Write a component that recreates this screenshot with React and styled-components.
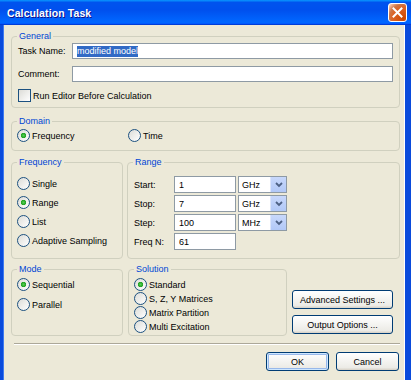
import styled, { createGlobalStyle } from "styled-components";

const GlobalStyle = createGlobalStyle`
  html, body {
    margin: 0;
    padding: 0;
    background: #ece9d8;
  }
  body {
    font-family: "Liberation Sans", Arial, sans-serif;
    font-size: 9px;
    color: #000;
  }
`;

const App = () => {
  return (
    <>
      <GlobalStyle />
      <Window>
        <TitleBar>
          <Title>Calculation Task</Title>
          <CloseButton>
            <svg width="11" height="11" viewBox="0 0 11 11">
              <path d="M1.5 1.5 L9.5 9.5 M9.5 1.5 L1.5 9.5" stroke="#fff" strokeWidth="2" strokeLinecap="square" />
            </svg>
          </CloseButton>
        </TitleBar>

        <Body>
          <Group $h={77}>
            <Legend>General</Legend>
            <GroupBody $gap={7} $pt={1}>
              <Row>
                <FieldLabel $w={56}>Task Name:</FieldLabel>
                <TextBox>
                  <Selected>modified model</Selected>
                </TextBox>
              </Row>
              <Row>
                <FieldLabel $w={56}>Comment:</FieldLabel>
                <TextBox />
              </Row>
              <Row>
                <CheckBox />
                <OptionText>Run Editor Before Calculation</OptionText>
              </Row>
            </GroupBody>
          </Group>

          <Group $h={35} $mt={8}>
            <Legend>Domain</Legend>
            <GroupBody $pt={2}>
              <Row>
                <Option $w={111}>
                  <Radio $on />
                  <OptionText>Frequency</OptionText>
                </Option>
                <Option>
                  <Radio />
                  <OptionText>Time</OptionText>
                </Option>
              </Row>
            </GroupBody>
          </Group>

          <Columns $mt={6} $gap={4}>
            <Group $h={102} $w={112}>
              <Legend>Frequency</Legend>
              <GroupBody $gap={6} $pt={9}>
                <Option>
                  <Radio />
                  <OptionText>Single</OptionText>
                </Option>
                <Option>
                  <Radio $on />
                  <OptionText>Range</OptionText>
                </Option>
                <Option>
                  <Radio />
                  <OptionText>List</OptionText>
                </Option>
                <Option>
                  <Radio />
                  <OptionText>Adaptive Sampling</OptionText>
                </Option>
              </GroupBody>
            </Group>

            <Group $h={102} $grow>
              <Legend>Range</Legend>
              <RangeGrid>
                <FieldLabel>Start:</FieldLabel>
                <TextBox $h={17}>1</TextBox>
                <Dropdown value="GHz" />
                <FieldLabel>Stop:</FieldLabel>
                <TextBox $h={17}>7</TextBox>
                <Dropdown value="GHz" />
                <FieldLabel>Step:</FieldLabel>
                <TextBox $h={17}>100</TextBox>
                <Dropdown value="MHz" />
                <FieldLabel>Freq N:</FieldLabel>
                <TextBox $h={17}>61</TextBox>
              </RangeGrid>
            </Group>
          </Columns>

          <Columns $mt={5} $gap={5}>
            <Group $h={72} $w={112}>
              <Legend>Mode</Legend>
              <GroupBody $gap={7} $pt={3}>
                <Option>
                  <Radio $on />
                  <OptionText>Sequential</OptionText>
                </Option>
                <Option>
                  <Radio />
                  <OptionText>Parallel</OptionText>
                </Option>
              </GroupBody>
            </Group>

            <Group $h={72} $w={159}>
              <Legend>Solution</Legend>
              <GroupBody $gap={1} $pt={3}>
                <Option>
                  <Radio $on />
                  <OptionText>Standard</OptionText>
                </Option>
                <Option>
                  <Radio />
                  <OptionText>S, Z, Y Matrices</OptionText>
                </Option>
                <Option>
                  <Radio />
                  <OptionText>Matrix Partition</OptionText>
                </Option>
                <Option>
                  <Radio />
                  <OptionText>Multi Excitation</OptionText>
                </Option>
              </GroupBody>
            </Group>

            <SideButtons>
              <Button $w={101}>Advanced Settings ...</Button>
              <Button $w={101}>Output Options ...</Button>
            </SideButtons>
          </Columns>

          <Separator />

          <Footer>
            <Button $w={63} $default>OK</Button>
            <Button $w={63}>Cancel</Button>
          </Footer>
        </Body>
      </Window>
    </>
  );
};

const Dropdown = ({ value }) => (
  <Select>
    <SelectValue>{value}</SelectValue>
    <SelectArrow>
      <svg width="8" height="6" viewBox="0 0 8 6">
        <path d="M1 1 L4 4 L7 1" stroke="#4d6185" strokeWidth="1.8" fill="none" />
      </svg>
    </SelectArrow>
  </Select>
);

export default App;

const Window = styled.div`
  width: 411px;
  height: 380px;
  display: flex;
  flex-direction: column;
  overflow: hidden;
`;

const TitleBar = styled.div`
  flex: none;
  height: 25px;
  display: flex;
  align-items: center;
  justify-content: space-between;
  padding: 0 4px 0 7px;
  box-sizing: border-box;
  background: linear-gradient(
    180deg,
    #0997ff 0%,
    #0053ee 10%,
    #0050ee 40%,
    #0066ff 85%,
    #0066ff 90%,
    #005bff 94%,
    #003dd7 97%,
    #003dd7 100%
  );
`;

const Title = styled.div`
  color: #fff;
  font-size: 10.5px;
  font-weight: 700;
  letter-spacing: 0.1px;
  text-shadow: 1px 1px #0f1089;
`;

const CloseButton = styled.div`
  width: 19px;
  height: 19px;
  box-sizing: border-box;
  border: 1px solid #fff;
  border-radius: 3px;
  display: flex;
  align-items: center;
  justify-content: center;
  background: radial-gradient(
    circle at 85% 85%,
    #cc4600 0%,
    #dc6527 55%,
    #cd7546 70%,
    #ffccb2 95%,
    #fff 100%
  );
`;

const Body = styled.div`
  flex: 1;
  display: flex;
  flex-direction: column;
  background: #ece9d8;
  border-left: 3px solid #0a4bdc;
  border-right: 6px solid #0a4bdc;
  box-shadow: inset 1px 0 #3f7af0, inset -1px 0 #fff;
  padding: 6px 5px 0 8px;
`;

const Group = styled.fieldset`
  margin: ${(p) => p.$mt || 0}px 0 0 0;
  padding: 0 6px 0 4px;
  min-width: 0;
  height: ${(p) => p.$h}px;
  width: ${(p) => (p.$w ? `${p.$w}px` : "auto")};
  flex: ${(p) => (p.$grow ? 1 : "none")};
  box-sizing: border-box;
  border: 1px solid #d0d0bf;
  border-radius: 4px;
`;

const Legend = styled.legend`
  padding: 0 2px;
  margin-left: 1px;
  color: #0046d5;
  line-height: 11px;
`;

const GroupBody = styled.div`
  display: flex;
  flex-direction: column;
  gap: ${(p) => p.$gap || 0}px;
  padding-top: ${(p) => p.$pt || 0}px;
`;

const Row = styled.div`
  display: flex;
  align-items: center;
`;

const FieldLabel = styled.div`
  flex: none;
  width: ${(p) => (p.$w ? `${p.$w}px` : "auto")};
  padding-left: 2px;
  box-sizing: border-box;
  white-space: nowrap;
`;

const TextBox = styled.div`
  flex: 1;
  height: ${(p) => p.$h || 16}px;
  box-sizing: border-box;
  border: 1px solid #8e9aa4;
  background: #fff;
  padding: 0 4px;
  display: flex;
  align-items: center;
`;

const Selected = styled.span`
  background: #316ac5;
  color: #fff;
  line-height: 11px;
`;

const CheckBox = styled.span`
  width: 13px;
  height: 13px;
  margin-left: 2px;
  box-sizing: border-box;
  border: 1px solid #1c5180;
  background: linear-gradient(135deg, #dcdcd7, #fff);
`;

const Option = styled.div`
  display: flex;
  align-items: center;
  width: ${(p) => (p.$w ? `${p.$w}px` : "auto")};
  height: 13px;
`;

const Radio = styled.span`
  flex: none;
  width: 13px;
  height: 13px;
  margin-left: 1px;
  box-sizing: border-box;
  border: 1px solid #1c5180;
  border-radius: 50%;
  background: ${(p) =>
    p.$on
      ? "radial-gradient(circle, #55d055 0, #21a121 2.4px, transparent 3px), linear-gradient(135deg, #dcdcd7, #fff)"
      : "linear-gradient(135deg, #dcdcd7, #fff)"};
`;

const OptionText = styled.span`
  margin-left: 2px;
  white-space: nowrap;
`;

const Columns = styled.div`
  display: flex;
  gap: ${(p) => p.$gap}px;
  margin-top: ${(p) => p.$mt}px;
`;

const RangeGrid = styled.div`
  display: grid;
  grid-template-columns: 40px 62px 49px;
  grid-auto-rows: 17px;
  column-gap: 2px;
  row-gap: 2px;
  align-items: center;
  padding-top: 8px;
`;

const Select = styled.div`
  height: 17px;
  box-sizing: border-box;
  border: 1px solid #8e9aa4;
  background: #fff;
  display: flex;
  align-items: stretch;
`;

const SelectValue = styled.span`
  flex: 1;
  padding-left: 3px;
  display: flex;
  align-items: center;
`;

const SelectArrow = styled.span`
  width: 15px;
  display: flex;
  align-items: center;
  justify-content: center;
  background: linear-gradient(180deg, #c8d8fb, #b1c8f7);
  border-left: 1px solid #dbe5fb;
`;

const SideButtons = styled.div`
  display: flex;
  flex-direction: column;
  justify-content: flex-end;
  gap: 6px;
  padding-bottom: 2px;
`;

const Button = styled.div`
  width: ${(p) => p.$w}px;
  height: 19px;
  box-sizing: border-box;
  border: 1px solid #003c74;
  border-radius: 3px;
  background: linear-gradient(180deg, #fff, #ecebe6 86%, #d6d0c5);
  display: flex;
  align-items: center;
  justify-content: center;
  white-space: nowrap;
  box-shadow: ${(p) =>
    p.$default ? "inset 0 0 0 1px #cee7ff, inset 0 0 0 2px #98b8ea" : "none"};
`;

const Separator = styled.div`
  margin-top: 7px;
  margin-left: 3px;
  border-top: 1px solid #aca899;
  border-bottom: 1px solid #fff;
`;

const Footer = styled.div`
  display: flex;
  justify-content: flex-end;
  gap: 7px;
  margin-top: 7px;
  padding-right: 1px;
`;
